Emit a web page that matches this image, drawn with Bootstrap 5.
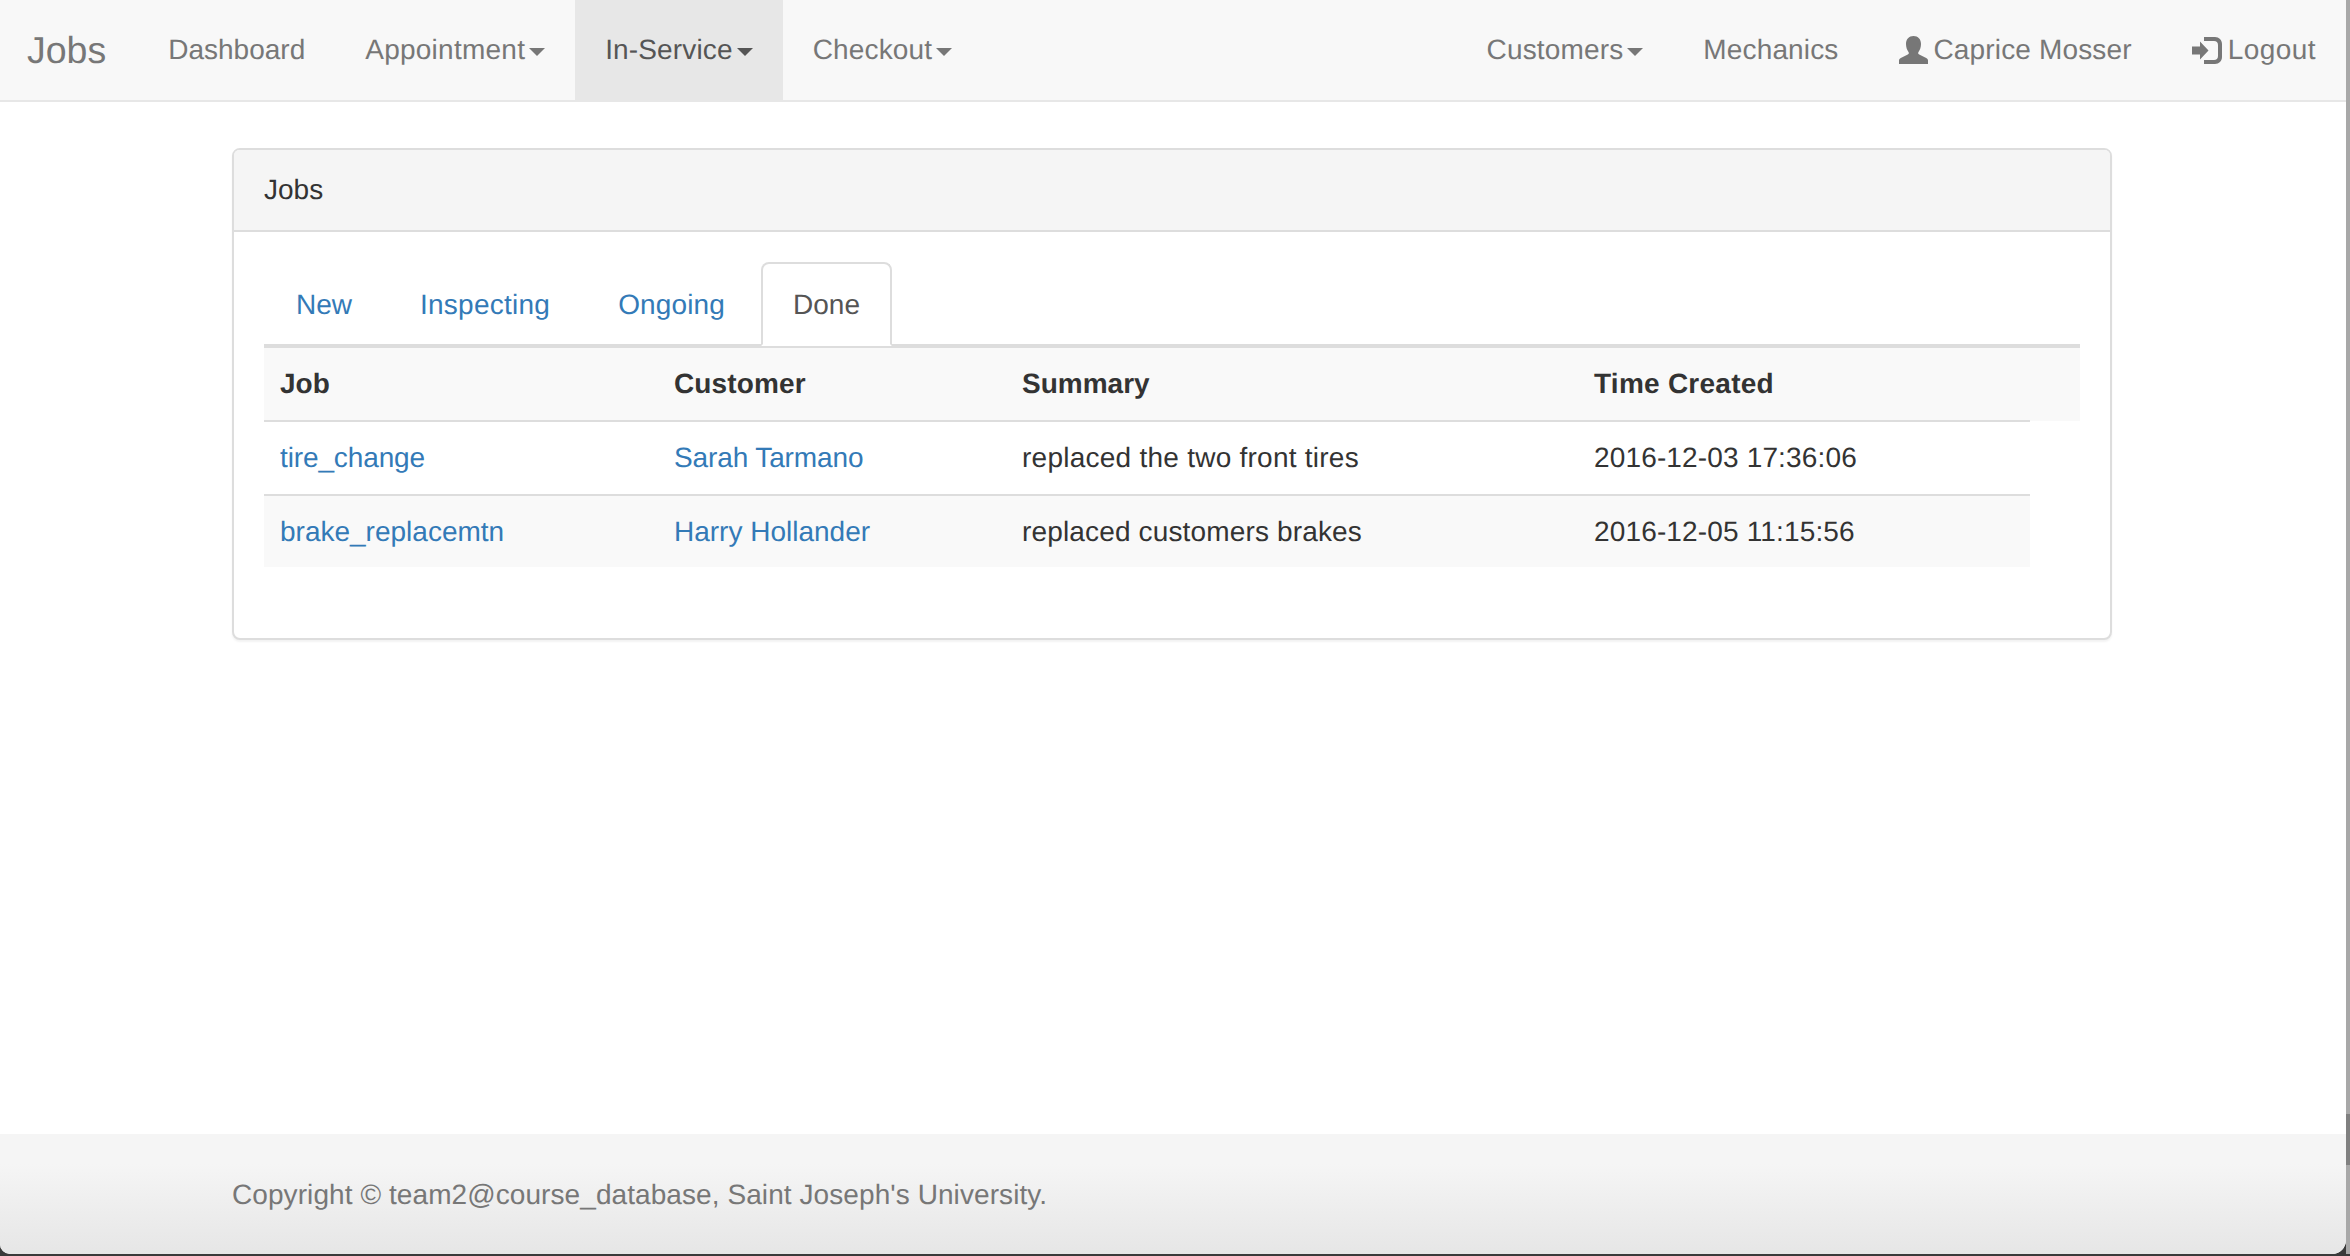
<!DOCTYPE html>
<html lang="en">
<head>
    <meta charset="UTF-8">
    <title>Jobs</title>
    <link href="https://cdn.jsdelivr.net/npm/bootstrap@5.3.3/dist/css/bootstrap.min.css" rel="stylesheet">
    <style>
        html, body { height: 100%; }
        body { font-family: "Liberation Sans", Arial, sans-serif; font-size: 28px; color: #333; background: #3a3a3a; text-rendering: geometricPrecision; }
        a { text-decoration: none; color: #337ab7; }
        .track-tight { letter-spacing: -.12px; }
        .track-1 { letter-spacing: .15px; }
        .track-2 { letter-spacing: .25px; }
        .track-3 { letter-spacing: .45px; }
        .app-window { height: 1254px; width: 2346px; background: #fff; display: flex; flex-direction: column; border-bottom-left-radius: 10px; border-bottom-right-radius: 14px; overflow: hidden; }
        .edge-strip { width: 4px; height: 1254px; background: linear-gradient(to bottom, #a8a8a8 0, #a8a8a8 1114px, #808080 1114px, #808080 1165px, #a8a8a8 1165px); }
        .top-bar { height: 102px; background: #f8f8f8; border-bottom: 2px solid #e7e7e7; padding: 0; }
        .top-bar .nav-link { height: 100px; display: flex; align-items: center; padding: 0 30px; color: #777; font-size: 28px; }
        .top-bar .nav-link.current { background: #e7e7e7; color: #555; }
        .brand-link { font-size: 37.500px; color: #777; padding: 0 32px 0 27px; height: 100px; line-height: 100px; margin: 0; }
        .arrow-down { display: inline-block; margin-left: 4px; margin-top: 4px; border-top: 8px solid currentColor; border-left: 8px solid transparent; border-right: 8px solid transparent; }
        .glyph-svg { fill: #777; margin-right: 6px; }
        .page-wrap { width: 1880px; margin: 46px 0 0 232px; }
        .jobs-panel { border: 2px solid #ddd; border-radius: 8px; box-shadow: 0 2px 2px rgba(0,0,0,.05); height: 492px; }
        .jobs-panel .card-header { height: 82px; padding: 0 30px; line-height: 80px; background: #f5f5f5; border-bottom: 2px solid #ddd; color: #333; }
        .jobs-panel .card-body { padding: 30px; }
        .job-tabs { border-bottom: 4px solid #ddd; }
        .job-tabs .nav-link { padding: 21px 30px 19px; margin-right: 4px; border: 2px solid transparent; border-radius: 8px 8px 0 0; color: #337ab7; line-height: 40px; margin-bottom: -2px; }
        .job-tabs .nav-link.active { color: #555; background: #fff; border-color: #ddd #ddd #fff; }
        .job-table { width: 1816px; table-layout: fixed; border-collapse: collapse; margin: 0; color: #333; }
        .job-table th, .job-table td { padding: 0 16px; height: 74px; font-size: 28px; vertical-align: middle; }
        .job-table th { background: #f9f9f9; height: 73px; }
        .job-table .line-b { border-bottom: 2px solid #ddd; }
        .job-table .odd-row td { background: #f9f9f9; height: 72px; }
        .job-table .odd-row td.no-fill { background: #fff; }
        .col-job { width: 394px; }
        .col-cust { width: 348px; }
        .col-sum { width: 572px; }
        .col-time { width: 452px; }
        .col-tail { width: 50px; }
        .page-foot { margin-top: auto; height: 120px; background: linear-gradient(to bottom, #f5f5f5 25%, #e6e6e6); color: #777; padding-left: 232px; line-height: 122px; letter-spacing: .08px; }
    </style>
</head>
<body>
    <div class="d-flex">
        <div class="app-window">
            <nav class="top-bar d-flex justify-content-between">
                <ul class="nav">
                    <li class="nav-item"><a class="brand-link d-block" href="#">Jobs</a></li>
                    <li class="nav-item"><a class="nav-link" href="#">Dashboard</a></li>
                    <li class="nav-item"><a class="nav-link track-2" href="#">Appointment<span class="arrow-down"></span></a></li>
                    <li class="nav-item"><a class="nav-link current track-1" href="#">In-Service<span class="arrow-down"></span></a></li>
                    <li class="nav-item"><a class="nav-link track-1" href="#">Checkout<span class="arrow-down"></span></a></li>
                </ul>
                <ul class="nav">
                    <li class="nav-item"><a class="nav-link track-1" href="#">Customers<span class="arrow-down"></span></a></li>
                    <li class="nav-item"><a class="nav-link track-1" href="#">Mechanics</a></li>
                    <li class="nav-item"><a class="nav-link track-1" href="#">
                        <svg class="glyph-svg" width="29" height="28" viewBox="0 0 29 28"><path d="M14.500 0c4.500 0 7.500 3 7.500 8 0 3-1 6-2.500 8-.6 1-.4 2 .7 2.600l7 3.400c1 .6 1.800 1.400 1.800 2.500V28H0v-3.500c0-1.100.8-1.900 1.800-2.500l7-3.400c1.100-.6 1.300-1.600.7-2.600C8 14 7 11 7 8c0-5 3-8 7.500-8z"/></svg>
                        Caprice Mosser</a></li>
                    <li class="nav-item"><a class="nav-link track-3" href="#">
                        <svg class="glyph-svg" width="30" height="27" viewBox="0 0 30 27"><path d="M0 9.500h8V4.500l8.500 9-8.500 9v-5H0z"/><path d="M12 0h11c4 0 7 3 7 7v13c0 4-3 7-7 7H12v-4h10c2.500 0 4-1.500 4-4V8c0-2.500-1.500-4-4-4H12z"/></svg>
                        Logout</a></li>
                </ul>
            </nav>

            <div class="page-wrap">
                <div class="card jobs-panel">
                    <div class="card-header">Jobs</div>
                    <div class="card-body">
                        <ul class="nav job-tabs">
                            <li class="nav-item"><a class="nav-link" href="#">New</a></li>
                            <li class="nav-item"><a class="nav-link track-2" href="#">Inspecting</a></li>
                            <li class="nav-item"><a class="nav-link track-1" href="#">Ongoing</a></li>
                            <li class="nav-item"><a class="nav-link active" href="#">Done</a></li>
                        </ul>
                        <table class="job-table">
                            <colgroup>
                                <col class="col-job"><col class="col-cust"><col class="col-sum"><col class="col-time"><col class="col-tail">
                            </colgroup>
                            <thead>
                                <tr>
                                    <th class="line-b">Job</th>
                                    <th class="line-b track-1">Customer</th>
                                    <th class="line-b">Summary</th>
                                    <th class="line-b track-2">Time Created</th>
                                    <th></th>
                                </tr>
                            </thead>
                            <tbody>
                                <tr>
                                    <td class="line-b track-tight"><a href="#">tire_change</a></td>
                                    <td class="line-b track-tight"><a href="#">Sarah Tarmano</a></td>
                                    <td class="line-b track-2">replaced the two front tires</td>
                                    <td class="line-b track-1">2016-12-03 17:36:06</td>
                                    <td></td>
                                </tr>
                                <tr class="odd-row">
                                    <td><a href="#">brake_replacemtn</a></td>
                                    <td><a href="#">Harry Hollander</a></td>
                                    <td class="track-1">replaced customers brakes</td>
                                    <td class="track-1">2016-12-05 11:15:56</td>
                                    <td class="no-fill"></td>
                                </tr>
                            </tbody>
                        </table>
                    </div>
                </div>
            </div>

            <footer class="page-foot">Copyright © team2@course_database, Saint Joseph's University.</footer>
        </div>
        <div class="edge-strip"></div>
    </div>
    <script src="https://cdn.jsdelivr.net/npm/bootstrap@5.3.3/dist/js/bootstrap.bundle.min.js"></script>
</body>
</html>
